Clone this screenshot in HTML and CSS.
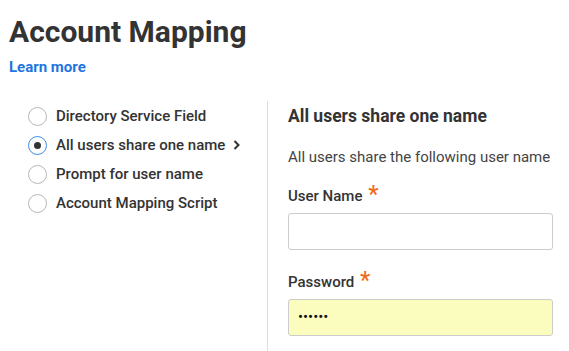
FILE: index.html
```html
<!DOCTYPE html>
<html>
<head>
<meta charset="utf-8">
<link rel="stylesheet" href="styles.css">
</head>
<body>
<div class="page">
  <h1 class="title">Account Mapping</h1>
  <a class="learn" href="#">Learn more</a>
  <div class="cols">
    <div class="left">
      <div class="opt"><span class="radio"></span><span class="lbl">Directory Service Field</span></div>
      <div class="opt"><span class="radio on"></span><span class="lbl">All users share one name</span>
        <svg class="chev" width="8" height="10" viewBox="0 0 8 10"><path d="M1.5 1 L5.5 5 L1.5 9" fill="none" stroke="#333" stroke-width="2"/></svg>
      </div>
      <div class="opt"><span class="radio"></span><span class="lbl">Prompt for user name</span></div>
      <div class="opt"><span class="radio"></span><span class="lbl">Account Mapping Script</span></div>
    </div>
    <div class="right">
      <h2 class="head">All users share one name</h2>
      <p class="desc">All users share the following user name</p>
      <label class="field-label first">User Name <span class="req">*</span></label>
      <div class="input"></div>
      <label class="field-label">Password <span class="req">*</span></label>
      <div class="input pw">••••••</div>
    </div>
  </div>
</div>
</body>
</html>
```
FILE: styles.css
```css
html, body { margin: 0; padding: 0; background: #fff; }
body { font-family: Roboto, "Liberation Sans", sans-serif; color: #333; }
.page { padding: 12px 16px 0 9px; }
.title { margin: 0; font-size: 30px; font-weight: 700; line-height: 40px; color: #333; }
.learn { display: block; margin-top: 6px; font-size: 15px; font-weight: 700; color: #1f74e0; text-decoration: none; line-height: 18px; }
.cols { display: flex; margin-top: 25px; }
.left { width: 239px; padding-left: 19px; }
.opt { display: flex; align-items: center; height: 29px; }
.radio { width: 17px; height: 17px; border: 1.5px solid #b8b8b8; border-radius: 50%; box-sizing: content-box; margin-right: 9px; margin-top: 2px; display: flex; align-items: center; justify-content: center; flex: none; }
.radio.on { border-color: #3f8ee0; }
.radio.on::after { content: ""; width: 7px; height: 7px; border-radius: 50%; background: #333; }
.lbl { font-size: 15px; font-weight: 500; color: #333; }
.chev { margin-left: 8px; }
.right { flex: 1; border-left: 1px solid #ddd; padding-left: 20px; padding-top: 3px; min-height: 247px; }
.head { margin: 0; font-size: 17.5px; font-weight: 700; line-height: 24px; color: #333; }
.desc { margin: 19px 0 0; font-size: 15px; font-weight: 400; color: #444; line-height: 20px; }
.field-label { display: block; margin-top: 22px; font-size: 15px; font-weight: 500; color: #333; line-height: 20px; }
.field-label.first { margin-top: 19px; }
.req { color: #f26b1d; font-size: 23px; vertical-align: -1px; line-height: 10px; margin-left: 2px; }
.input { margin-top: 7px; height: 35px; border: 1px solid #ccc; border-radius: 3px; background: #fff; }
.input.pw { background: #fbfdbf; font-size: 15px; line-height: 35px; padding-left: 9px; color: #111; }
```
